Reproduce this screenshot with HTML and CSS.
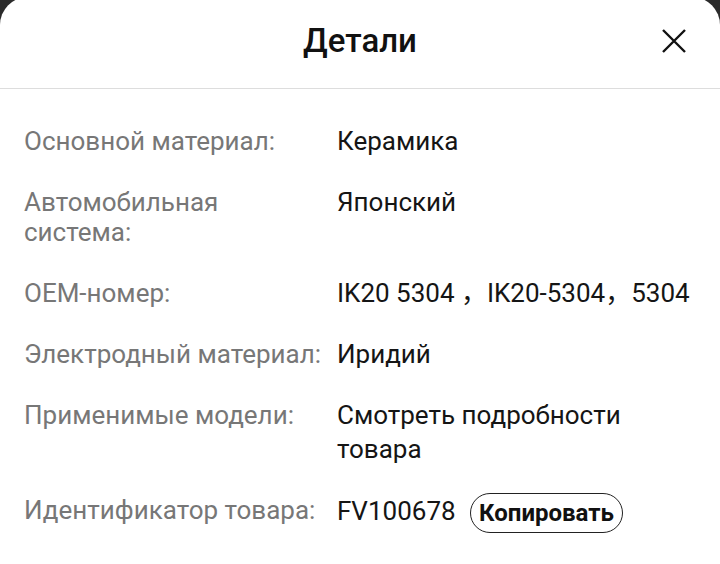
FILE: index.html
```html
<!DOCTYPE html>
<html lang="ru">

<head>
    <meta charset="UTF-8">
    <meta name="viewport" content="width=device-width, initial-scale=1.0">
    <title>Детали</title>
    <link rel="stylesheet" href="styles.css">
</head>

<body>
    <div class="sheet">
        <div class="sheet-header">
            <h1>Детали</h1>
            <button class="close-btn" aria-label="Закрыть">
                <svg width="26" height="26" viewBox="0 0 26 26">
                    <path d="M2 2 L24 24 M24 2 L2 24" stroke="#111" stroke-width="2.4" fill="none" />
                </svg>
            </button>
        </div>

        <div class="details">
            <div class="row">
                <div class="label">Основной материал:</div>
                <div class="value">Керамика</div>
            </div>
            <div class="row">
                <div class="label">Автомобильная система:</div>
                <div class="value">Японский</div>
            </div>
            <div class="row">
                <div class="label">OEM-номер:</div>
                <div class="value">IK20 5304 ，IK20-5304，5304</div>
            </div>
            <div class="row">
                <div class="label">Электродный материал:</div>
                <div class="value">Иридий</div>
            </div>
            <div class="row">
                <div class="label">Применимые модели:</div>
                <div class="value">Смотреть подробности товара</div>
            </div>
            <div class="row">
                <div class="label">Идентификатор товара:</div>
                <div class="value">FV100678 <button class="copy-btn">Копировать</button></div>
            </div>
        </div>
    </div>
</body>

</html>
```

FILE: styles.css
```css
body {
    margin: 0;
    padding: 0;
    background-color: #2b2b2b;
    font-family: Roboto, "Noto Sans CJK SC", sans-serif;
}

.sheet {
    margin-top: -3px;
    background-color: #fff;
    border-radius: 28px 28px 0 0;
    min-height: 570px;
}

.sheet-header {
    position: relative;
    height: 91px;
    display: flex;
    align-items: center;
    justify-content: center;
    border-bottom: 1px solid #dddddd;
}

.sheet-header h1 {
    margin: 0 0 4px;
    font-size: 33px;
    font-weight: 500;
    color: #111;
}

.close-btn {
    position: absolute;
    right: 33px;
    top: 31px;
    padding: 0;
    border: none;
    background: none;
    cursor: pointer;
}

.details {
    padding: 35px 24px 0;
}

.row {
    display: flex;
    align-items: flex-start;
    margin-bottom: 27px;
}

.label {
    width: 300px;
    flex-shrink: 0;
    margin-right: 13px;
    padding: 2px 0;
    font-size: 26px;
    line-height: 30px;
    color: #777;
}

.value {
    font-size: 26px;
    line-height: 34px;
    color: #151515;
}

.copy-btn {
    margin-left: 8px;
    padding: 5px 8px;
    border: 1px solid #222;
    border-radius: 22px;
    background: #fff;
    font-family: Roboto, sans-serif;
    font-size: 24px;
    line-height: 28px;
    font-weight: 700;
    color: #111;
    vertical-align: middle;
}
```
